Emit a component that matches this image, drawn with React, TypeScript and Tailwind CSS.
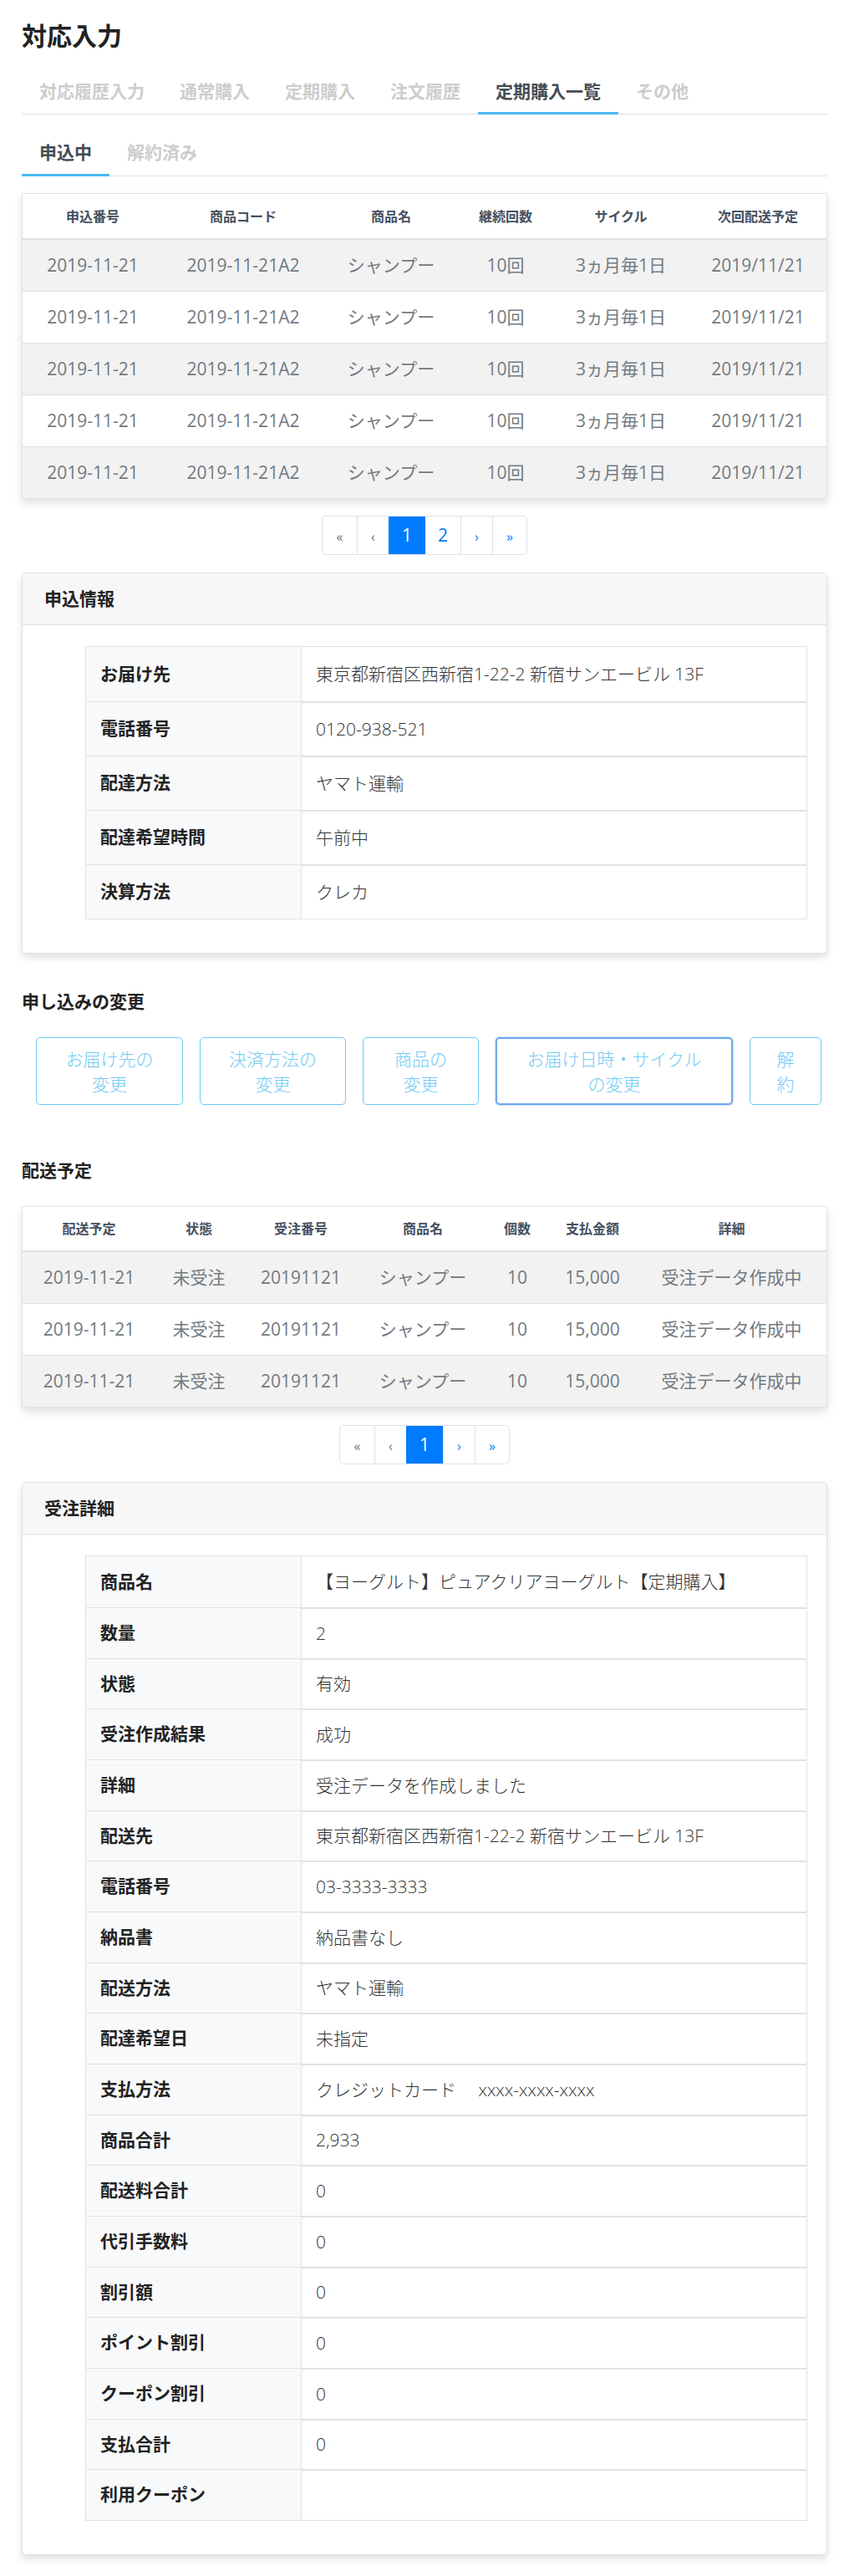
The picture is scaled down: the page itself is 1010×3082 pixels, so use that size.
import React from 'react';

// ============================================================
// 対応入力 / 定期購入一覧
// ============================================================

const FONT = "font-['Open_Sans','Noto_Sans_CJK_JP',sans-serif]";

const mainTabs = ['対応履歴入力', '通常購入', '定期購入', '注文履歴', '定期購入一覧', 'その他'];
const subTabs = ['申込中', '解約済み'];

const subscriptionRows = Array.from({ length: 5 }, () => [
  '2019-11-21',
  '2019-11-21A2',
  'シャンプー',
  '10回',
  '3ヵ月毎1日',
  '2019/11/21',
]);

const shippingRows = Array.from({ length: 3 }, () => [
  '2019-11-21',
  '未受注',
  '20191121',
  'シャンプー',
  '10',
  '15,000',
  '受注データ作成中',
]);

const applyInfo = [
  ['お届け先', '東京都新宿区西新宿1-22-2 新宿サンエービル 13F'],
  ['電話番号', '0120-938-521'],
  ['配達方法', 'ヤマト運輸'],
  ['配達希望時間', '午前中'],
  ['決算方法', 'クレカ'],
];

const orderDetail = [
  ['商品名', '【ヨーグルト】ピュアクリアヨーグルト【定期購入】'],
  ['数量', '2'],
  ['状態', '有効'],
  ['受注作成結果', '成功'],
  ['詳細', '受注データを作成しました'],
  ['配送先', '東京都新宿区西新宿1-22-2 新宿サンエービル 13F'],
  ['電話番号', '03-3333-3333'],
  ['納品書', '納品書なし'],
  ['配送方法', 'ヤマト運輸'],
  ['配達希望日', '未指定'],
  ['支払方法', 'クレジットカード　 xxxx-xxxx-xxxx'],
  ['商品合計', '2,933'],
  ['配送料合計', '0'],
  ['代引手数料', '0'],
  ['割引額', '0'],
  ['ポイント割引', '0'],
  ['クーポン割引', '0'],
  ['支払合計', '0'],
  ['利用クーポン', ''],
];

const TabBar = ({ tabs, active, height }: { tabs: string[]; active: string; height: string }) => (
  <div className="flex border-b border-[#e1e1e7]">
    {tabs.map((t) => (
      <div
        key={t}
        className={
          (t === active
            ? 'border-[#4bb9f1] text-[#454b53] '
            : 'border-transparent text-[#cdcdcd] ') +
          height +
          ' -mb-px flex items-center border-b-[3px] px-[21px] text-[21px] font-bold leading-none'
        }
      >
        {t}
      </div>
    ))}
  </div>
);

const Pagination = ({ pages }: { pages: number }) => (
  <div className="flex justify-center">
    <div className="flex h-[47px] overflow-hidden rounded-[5px] border border-[#dee2e6] bg-white">
      <span className="flex w-[41px] items-center justify-center pt-[2px] text-[16px] text-[#6c757d]">«</span>
      <span className="flex w-[38px] items-center justify-center border-l border-[#dee2e6] pt-[2px] text-[16px] text-[#6c757d]">‹</span>
      <span className="flex w-[44px] items-center justify-center bg-[#007bff] text-[21px] text-white">1</span>
      {pages > 1 && (
        <span className="flex w-[42px] items-center justify-center text-[21px] text-[#007bff]">2</span>
      )}
      <span className="flex w-[38px] items-center justify-center border-l border-[#dee2e6] pt-[2px] text-[16px] text-[#007bff]">›</span>
      <span className="flex w-[41px] items-center justify-center border-l border-[#dee2e6] pt-[2px] text-[16px] text-[#007bff]">»</span>
    </div>
  </div>
);

const DataTable = ({
  heads,
  rows,
  cols,
  headHeight,
}: {
  heads: string[];
  rows: string[][];
  cols: string;
  headHeight: string;
}) => (
  <div className="border border-[#dee2e6] bg-white shadow-[0_5px_10px_rgba(0,0,0,0.12)]">
    <div className={'grid items-center border-b-2 border-[#dee2e6] text-center text-[16px] font-bold text-[#465061] ' + cols + ' ' + headHeight}>
      {heads.map((h) => (
        <div key={h}>{h}</div>
      ))}
    </div>
    {rows.map((r, i) => (
      <div
        key={i}
        className={
          'grid items-center text-center text-[21px] text-[#737a82] ' +
          cols +
          (i % 2 === 0 ? ' bg-[#f2f2f2]' : ' bg-white') +
          (i < rows.length - 1 ? ' h-[62px] border-b border-[#dee2e6]' : ' h-[61px]')
        }
      >
        {r.map((c, j) => (
          <div key={j} className="whitespace-nowrap">
            {c}
          </div>
        ))}
      </div>
    ))}
  </div>
);

const InfoCard = ({ title, rows, dense }: { title: string; rows: string[][]; dense?: boolean }) => (
  <div className="rounded-[5px] border border-[#dfdfdf] bg-white shadow-[0_5px_10px_rgba(0,0,0,0.12)]">
    <div className="flex h-[62px] items-center rounded-t-[5px] border-b border-[#dfdfdf] bg-[#f7f7f7] px-[26px] text-[21px] font-bold text-[#212121]">
      {title}
    </div>
    <div className="pb-[40px] pl-[75px] pr-[23px] pt-[25px]">
      <div className="border border-[#dee2e6]">
        {rows.map(([label, value], i) => (
          <div
            key={label}
            className={
              'grid grid-cols-[258px_1fr] ' +
              (dense ? (i % 3 === 2 ? 'h-[60px]' : 'h-[61px]') : 'h-[65px]') +
              (i > 0 ? ' border-t border-[#dee2e6]' : '')
            }
          >
            <div className="flex items-center border-r border-[#dee2e6] bg-[#f8f9fa] pl-[17px] text-[21px] font-bold text-[#222]">
              {label}
            </div>
            <div
              className={
                'flex items-center pl-[17px] text-[21px] font-light text-[#333]' +
                (i > 0 ? ' border-t border-[#dee2e6]' : '')
              }
            >
              {value}
            </div>
          </div>
        ))}
      </div>
    </div>
  </div>
);

const changeButtons = [
  { lines: ['お届け先の', '変更'], w: 'w-[176px]' },
  { lines: ['決済方法の', '変更'], w: 'w-[175px]' },
  { lines: ['商品の', '変更'], w: 'w-[139px]' },
  { lines: ['お届け日時・サイクル', 'の変更'], w: 'w-[284px]', focus: true },
  { lines: ['解', '約'], w: 'w-[86px]' },
];

export default function App() {
  return (
    <div className={FONT + ' min-h-[3082px] bg-white pb-[24px] pl-[26px] pr-[20px] pt-[25px]'}>
      <h1 className="text-[30px] font-bold leading-[36px] text-[#222]">対応入力</h1>

      <div className="mt-[23px]">
        <TabBar tabs={mainTabs} active="定期購入一覧" height="h-[53px]" />
      </div>
      <div className="mt-[20px]">
        <TabBar tabs={subTabs} active="申込中" height="h-[54px]" />
      </div>

      {/* 申込一覧 */}
      <div className="mt-[20px]">
        <DataTable
          heads={['申込番号', '商品コード', '商品名', '継続回数', 'サイクル', '次回配送予定']}
          rows={subscriptionRows}
          cols="grid-cols-[168px_192px_162px_112px_164px_1fr]"
          headHeight="h-[55px]"
        />
      </div>
      <div className="mt-[20px]">
        <Pagination pages={2} />
      </div>

      <div className="mt-[21px]">
        <InfoCard title="申込情報" rows={applyInfo} />
      </div>

      {/* 申し込みの変更 */}
      <h2 className="mt-[41px] text-[21px] font-bold leading-[32px] text-[#222]">申し込みの変更</h2>
      <div className="mt-[27px] flex gap-[20px] pl-[17px]">
        {changeButtons.map((b) => (
          <button
            key={b.lines.join('')}
            className={
              b.w +
              ' flex h-[81px] flex-col items-center justify-center rounded-[5px] bg-white text-[21px] font-light leading-[30px] text-[#74caf3] ' +
              (b.focus
                ? 'border-2 border-[#6fa8ee] shadow-[0_0_0_1px_rgba(111,168,238,0.35)]'
                : 'border border-[#6cc9f6]')
            }
          >
            {b.lines.map((l) => (
              <span key={l}>{l}</span>
            ))}
          </button>
        ))}
      </div>

      {/* 配送予定 */}
      <h2 className="mt-[62px] text-[21px] font-bold leading-[32px] text-[#222]">配送予定</h2>
      <div className="mt-[27px]">
        <DataTable
          heads={['配送予定', '状態', '受注番号', '商品名', '個数', '支払金額', '詳細']}
          rows={shippingRows}
          cols="grid-cols-[159px_104px_140px_152px_74px_106px_1fr]"
          headHeight="h-[54px]"
        />
      </div>
      <div className="mt-[21px]">
        <Pagination pages={1} />
      </div>

      <div className="mt-[21px]">
        <InfoCard title="受注詳細" rows={orderDetail} dense />
      </div>
    </div>
  );
}
